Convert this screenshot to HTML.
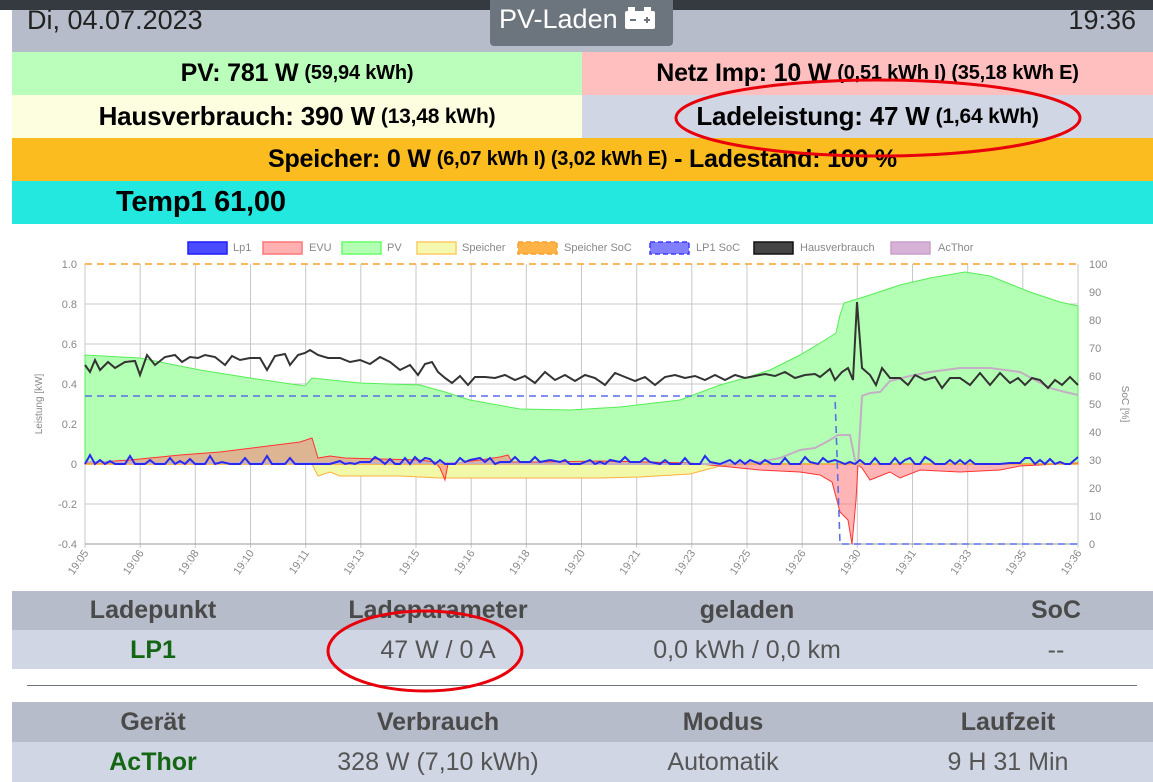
<!DOCTYPE html>
<html><head><meta charset="utf-8"><style>
*{margin:0;padding:0;box-sizing:border-box}
body{width:1153px;height:782px;overflow:hidden;background:#fff;font-family:"Liberation Sans",sans-serif;position:relative}
.abs{position:absolute}
.topbar{left:0;top:0;width:1153px;height:10px;background:#343a40}
.hdr{left:12px;top:10px;width:1141px;height:42px;background:#b6bcc9}
.row{position:absolute;display:flex;align-items:center;justify-content:center;font-weight:bold;font-size:23px;color:#000;letter-spacing:-0.2px}
.row small{font-size:18px;margin-left:6px}
.th{position:absolute;font-weight:bold;font-size:25px;color:#4a4a4a;text-align:center}
.td{position:absolute;font-size:25px;color:#555;text-align:center}
.g{color:#146614;font-weight:bold}
</style></head><body>
<div class="abs topbar"></div>
<div class="abs hdr"></div>
<div class="abs" style="left:27px;top:5px;font-size:27px;color:#222">Di, 04.07.2023</div>
<div class="abs" style="right:17px;top:5px;font-size:27px;color:#222">19:36</div>
<div class="abs" style="left:490px;top:0;width:183px;height:46px;background:#6c757d;border-radius:0 0 4px 4px;color:#fff;font-size:27px;padding:4px 0 0 9px">PV-Laden <svg width="30" height="22" viewBox="0 0 30 22" style="vertical-align:-1px"><rect x="3" y="0" width="7" height="5" fill="#fff"/><rect x="19" y="0" width="7" height="5" fill="#fff"/><rect x="0" y="4" width="30" height="18" rx="2" fill="#fff"/><rect x="5" y="12" width="6" height="2" fill="#6c757d"/><rect x="19" y="12" width="6" height="2" fill="#6c757d"/><rect x="21" y="10" width="2" height="6" fill="#6c757d"/></svg></div>

<div class="row" style="left:12px;top:52px;width:570px;height:43px;background:#bbfebb;font-size:25px">PV: 781 W<small style="font-size:20px">(59,94 kWh)</small></div>
<div class="row" style="left:582px;top:52px;width:571px;height:43px;background:#ffbfbf;font-size:25px">Netz Imp: 10 W<small style="font-size:20px">(0,51 kWh I) (35,18 kWh E)</small></div>
<div class="row" style="left:12px;top:95px;width:570px;height:43px;background:#fdfde0;font-size:26px">Hausverbrauch: 390 W<small style="font-size:21px">(13,48 kWh)</small></div>
<div class="row" style="left:582px;top:95px;width:571px;height:43px;background:#d0d6e4;font-size:26px">Ladeleistung: 47 W<small style="font-size:21px">(1,64 kWh)</small></div>
<div class="row" style="left:12px;top:138px;width:1141px;height:43px;background:#fbbc20;font-size:25px">Speicher: 0 W<small style="font-size:20px">(6,07 kWh I) (3,02 kWh E)</small>&nbsp;- Ladestand: 100 %</div>
<div class="row" style="left:12px;top:181px;width:1141px;height:43px;background:#22e8e0;justify-content:flex-start;padding-left:104px;font-size:29px">Temp1 61,00</div>

<svg class="abs" style="left:0;top:224px" width="1153" height="366" viewBox="0 224 1153 366" font-family="Liberation Sans,sans-serif" font-size="11" fill="#888">
<g font-size="11">
<rect x="188" y="242" width="39" height="12" fill="#4b4bff" stroke="#1c1cff" stroke-width="1.5"/><text x="233" y="251">Lp1</text>
<rect x="263" y="242" width="39" height="12" fill="#ffb1b1" stroke="#f77" stroke-width="1.5"/><text x="309" y="251">EVU</text>
<rect x="342" y="242" width="39" height="12" fill="#b3ffb3" stroke="#6f6" stroke-width="1.5"/><text x="387" y="251">PV</text>
<rect x="417" y="242" width="39" height="12" fill="#f5f9b0" stroke="#fc6" stroke-width="1.5"/><text x="462" y="251">Speicher</text>
<rect x="518" y="242" width="39" height="12" fill="#ffb347" stroke="#f9a030" stroke-width="1.5" stroke-dasharray="5,3"/><text x="564" y="251">Speicher SoC</text>
<rect x="650" y="242" width="39" height="12" fill="#8080ff" stroke="#3c3cff" stroke-width="1.5" stroke-dasharray="5,3"/><text x="696" y="251">LP1 SoC</text>
<rect x="754" y="242" width="39" height="12" fill="#444" stroke="#111" stroke-width="1.5"/><text x="800" y="251">Hausverbrauch</text>
<rect x="891" y="242" width="39" height="12" fill="#d6b3d6" stroke="#c8a0c8" stroke-width="1.5"/><text x="938" y="251">AcThor</text>
</g>
<g stroke="#c8c8c8" stroke-width="1">
<line x1="85" y1="304" x2="1078" y2="304"/><line x1="85" y1="344" x2="1078" y2="344"/><line x1="85" y1="384" x2="1078" y2="384"/><line x1="85" y1="424" x2="1078" y2="424"/><line x1="85" y1="464" x2="1078" y2="464"/><line x1="85" y1="504" x2="1078" y2="504"/>
<line x1="85" y1="264" x2="85" y2="548"/><line x1="140.2" y1="264" x2="140.2" y2="548"/><line x1="195.3" y1="264" x2="195.3" y2="548"/><line x1="250.5" y1="264" x2="250.5" y2="548"/><line x1="305.7" y1="264" x2="305.7" y2="548"/><line x1="360.8" y1="264" x2="360.8" y2="548"/><line x1="416" y1="264" x2="416" y2="548"/><line x1="471.2" y1="264" x2="471.2" y2="548"/><line x1="526.3" y1="264" x2="526.3" y2="548"/><line x1="581.5" y1="264" x2="581.5" y2="548"/><line x1="636.7" y1="264" x2="636.7" y2="548"/><line x1="691.8" y1="264" x2="691.8" y2="548"/><line x1="747" y1="264" x2="747" y2="548"/><line x1="802.2" y1="264" x2="802.2" y2="548"/><line x1="857.3" y1="264" x2="857.3" y2="548"/><line x1="912.5" y1="264" x2="912.5" y2="548"/><line x1="967.7" y1="264" x2="967.7" y2="548"/><line x1="1022.8" y1="264" x2="1022.8" y2="548"/><line x1="1078" y1="264" x2="1078" y2="548"/>
</g>
<line x1="85" y1="544" x2="1078" y2="544" stroke="#999"/>
<g text-anchor="end"><text x="77" y="268">1.0</text><text x="77" y="308">0.8</text><text x="77" y="348">0.6</text><text x="77" y="388">0.4</text><text x="77" y="428">0.2</text><text x="77" y="468">0</text><text x="77" y="508">-0.2</text><text x="77" y="548">-0.4</text></g>
<g><text x="1089" y="268">100</text><text x="1089" y="296">90</text><text x="1089" y="324">80</text><text x="1089" y="352">70</text><text x="1089" y="380">60</text><text x="1089" y="408">50</text><text x="1089" y="436">40</text><text x="1089" y="464">30</text><text x="1089" y="492">20</text><text x="1089" y="520">10</text><text x="1089" y="548">0</text></g>
<text transform="translate(42,404) rotate(-90)" text-anchor="middle" font-size="10">Leistung [kW]</text>
<text transform="translate(1122,404) rotate(90)" text-anchor="middle" font-size="10">SoC [%]</text>
<g font-size="11" text-anchor="end">
<text transform="translate(89,553) rotate(-55)">19:05</text><text transform="translate(144.2,553) rotate(-55)">19:06</text><text transform="translate(199.3,553) rotate(-55)">19:08</text><text transform="translate(254.5,553) rotate(-55)">19:10</text><text transform="translate(309.7,553) rotate(-55)">19:11</text><text transform="translate(364.8,553) rotate(-55)">19:13</text><text transform="translate(420,553) rotate(-55)">19:15</text><text transform="translate(475.2,553) rotate(-55)">19:16</text><text transform="translate(530.3,553) rotate(-55)">19:18</text><text transform="translate(585.5,553) rotate(-55)">19:20</text><text transform="translate(640.7,553) rotate(-55)">19:21</text><text transform="translate(695.8,553) rotate(-55)">19:23</text><text transform="translate(751,553) rotate(-55)">19:25</text><text transform="translate(806.2,553) rotate(-55)">19:26</text><text transform="translate(861.3,553) rotate(-55)">19:30</text><text transform="translate(916.5,553) rotate(-55)">19:31</text><text transform="translate(971.7,553) rotate(-55)">19:33</text><text transform="translate(1026.8,553) rotate(-55)">19:35</text><text transform="translate(1082,553) rotate(-55)">19:36</text>
</g>
<polygon fill="#b3ffb3" stroke="#55ee55" stroke-width="1" points="85,464 85,355 140,358 200,370 250,378 305,386 312,378 360,383 420,385 445,392 470,400 520,409 570,410 620,407 680,400 720,385 745,378 770,370 800,355 825,340 836,333 840,315 844,303 870,295 900,285 930,278 965,272 990,276 1030,292 1060,302 1078,306 1078,464"/>
<polygon fill="#f1f9a8" stroke="#fcb040" stroke-width="1" points="312,464 318,476 330,472 340,476 400,476 440,478 600,478 640,477 690,474 720,466 740,464"/>
<polygon fill="rgba(255,120,120,0.55)" stroke="#f33" stroke-width="1" points="85,464 85,463 130,460 180,455 220,452 260,447 300,442 312,438 318,458 330,456 345,458 380,459 420,460 435,462 440,468 445,480 448,464 480,460 500,457 508,455 512,462 540,462 600,461 690,463 720,466 760,470 800,472 820,475 832,482 840,512 848,520 852,544 856,500 858,465 862,468 870,480 880,476 890,472 900,478 920,470 960,472 1000,470 1020,466 1078,463 1078,464"/>
<line x1="85" y1="464" x2="1078" y2="464" stroke="#f9a030" stroke-width="1.5"/>
<polyline fill="none" stroke="#c4aec4" stroke-width="2" points="85,462 100,462 130,463 300,463 440,463 600,464 720,464 760,462 780,458 800,450 815,448 830,440 838,435 850,435 855,460 858,464 862,396 870,393 880,392 890,381 910,376 930,372 960,368 990,368 1020,372 1035,380 1050,388 1065,392 1078,395"/>
<polyline fill="none" stroke="#5a6ee8" stroke-width="1.6" stroke-dasharray="7,5" points="85,396 835,396 840,544 1078,544"/>
<line x1="85" y1="264" x2="1078" y2="264" stroke="#f9a030" stroke-width="1.6" stroke-dasharray="7,5"/>
<polyline fill="none" stroke="#2a2aee" stroke-width="2" points="85,464 90,455 95,464 100,460 105,464 110,461 115,464 125,464 130,456 135,464 145,464 150,460 155,464 165,464 170,458 175,464 180,461 185,464 190,459 195,464 205,464 210,456 215,464 222,462 230,464 240,464 245,458 250,464 262,464 267,456 272,464 285,464 290,458 295,464 305,464 310,464 320,464 330,464 340,461 345,464 350,463 355,464 360,462 370,462 375,457 380,460 385,464 390,459 395,464 400,464 405,458 410,464 415,457 420,462 425,458 430,459 435,464 440,460 445,464 455,464 460,458 465,462 470,460 480,458 485,462 490,458 495,464 500,462 510,462 515,457 520,462 530,462 535,457 540,462 550,460 560,462 565,460 570,464 580,464 590,460 595,464 600,462 605,464 610,460 620,462 625,457 630,462 640,462 645,458 650,462 660,464 665,460 670,464 680,464 685,458 690,464 700,464 705,456 710,462 720,464 730,460 735,464 740,460 745,464 750,460 760,464 765,460 772,464 780,464 785,458 790,464 800,464 805,457 810,462 818,464 823,458 828,462 835,460 840,462 845,464 850,462 855,464 860,460 865,464 870,464 875,458 880,464 890,464 895,458 900,464 905,460 910,458 915,464 920,464 925,457 930,460 935,464 945,464 950,460 955,464 960,460 965,464 970,460 975,464 1000,464 1010,463 1020,463 1025,458 1030,458 1035,464 1040,460 1045,464 1050,459 1055,464 1060,462 1065,464 1070,464 1078,457"/>
<polyline fill="none" stroke="#333" stroke-width="2" points="85,365 90,372 95,360 100,370 108,362 115,368 125,362 135,361 140,375 147,355 155,365 165,357 175,355 182,362 190,357 198,358 205,355 215,357 225,365 232,356 240,360 250,358 260,358 267,370 275,356 285,354 290,365 298,355 305,353 310,350 318,355 328,358 340,358 350,362 360,360 370,364 380,357 390,362 400,370 410,365 418,375 425,364 432,362 438,372 445,378 452,383 460,376 468,385 475,377 485,377 495,378 505,375 515,380 525,376 535,383 545,372 555,380 565,375 575,381 585,375 595,378 605,385 615,373 625,377 635,381 645,377 655,385 665,377 675,375 685,378 695,376 705,380 715,375 725,380 735,375 745,378 755,376 765,374 775,376 785,372 795,378 805,375 815,374 820,377 830,369 835,380 842,372 848,368 853,380 857,302 862,368 870,375 876,385 882,368 890,378 900,378 908,385 915,375 925,380 935,377 942,388 950,378 960,378 970,385 980,373 990,385 1000,373 1010,383 1018,378 1025,385 1032,378 1040,380 1048,388 1055,380 1062,385 1070,377 1078,385"/>
</svg>

<div class="abs" style="left:12px;top:591px;width:1141px;height:39px;background:#b6bcc9"></div>
<div class="abs" style="left:12px;top:630px;width:1141px;height:39px;background:#d0d6e4"></div>
<div class="abs" style="left:27px;top:685px;width:1110px;height:1px;background:#6c757d"></div>
<div class="abs" style="left:12px;top:702px;width:1141px;height:40px;background:#b6bcc9"></div>
<div class="abs" style="left:12px;top:742px;width:1141px;height:40px;background:#d0d6e4"></div>

<div class="th" style="left:33px;top:596px;width:240px">Ladepunkt</div>
<div class="th" style="left:318px;top:596px;width:240px">Ladeparameter</div>
<div class="th" style="left:627px;top:596px;width:240px">geladen</div>
<div class="th" style="left:936px;top:596px;width:240px">SoC</div>
<div class="td g" style="left:33px;top:636px;width:240px">LP1</div>
<div class="td" style="left:318px;top:636px;width:240px">47 W / 0 A</div>
<div class="td" style="left:627px;top:636px;width:240px">0,0 kWh / 0,0 km</div>
<div class="td" style="left:936px;top:636px;width:240px">--</div>

<div class="th" style="left:33px;top:708px;width:240px">Gerät</div>
<div class="th" style="left:318px;top:708px;width:240px">Verbrauch</div>
<div class="th" style="left:603px;top:708px;width:240px">Modus</div>
<div class="th" style="left:888px;top:708px;width:240px">Laufzeit</div>
<div class="td g" style="left:33px;top:748px;width:240px">AcThor</div>
<div class="td" style="left:318px;top:748px;width:240px">328 W (7,10 kWh)</div>
<div class="td" style="left:603px;top:748px;width:240px">Automatik</div>
<div class="td" style="left:888px;top:748px;width:240px">9 H 31 Min</div>

<svg class="abs" style="left:0;top:0" width="1153" height="782">
<ellipse cx="878" cy="118" rx="202" ry="38" fill="none" stroke="#e8000b" stroke-width="3"/>
<ellipse cx="425" cy="651" rx="97" ry="40" fill="none" stroke="#e8000b" stroke-width="3"/>
</svg>
</body></html>
